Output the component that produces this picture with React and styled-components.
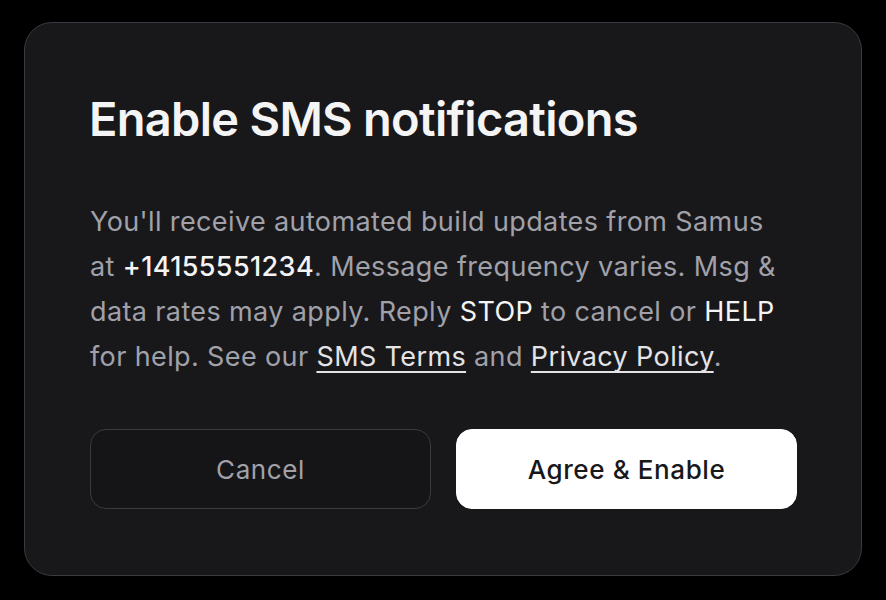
import React from 'react';
import styled, { createGlobalStyle } from 'styled-components';

const GlobalStyle = createGlobalStyle`
  html, body {
    margin: 0;
    padding: 0;
    background: #000000;
  }
  body {
    font-family: Inter, "Noto Sans", "Liberation Sans", sans-serif;
    -webkit-font-smoothing: antialiased;
  }
`;

const Screen = styled.div`
  width: 886px;
  height: 600px;
  box-sizing: border-box;
  padding: 22px 24px 24px 24px;
  background: #000000;
`;

const Dialog = styled.div`
  box-sizing: border-box;
  width: 838px;
  height: 554px;
  padding: 68px 64px 66px 65px;
  background: #18181b;
  border: 1.5px solid #3a3a40;
  border-radius: 28px;
  display: flex;
  flex-direction: column;
`;

const Title = styled.h2`
  margin: 0 0 0 -1px;
  font-size: 47px;
  line-height: 1.2;
  font-weight: 600;
  letter-spacing: -0.015em;
  color: #f4f4f5;
`;

const Body = styled.p`
  margin: 52px 0 0 0;
  max-width: 694px;
  font-size: 27px;
  line-height: 45px;
  letter-spacing: 0.38px;
  color: #a1a1aa;
`;

const Strong = styled.span`
  color: #f4f4f5;
  font-weight: ${p => (p.bold ? 500 : 400)};
`;

const Link = styled.a`
  color: #e4e4e7;
  text-decoration: underline;
  text-underline-offset: 5px;
  text-decoration-thickness: 1.5px;
  cursor: pointer;
`;

const Actions = styled.div`
  margin-top: auto;
  display: grid;
  grid-template-columns: 1fr 1fr;
  gap: 25px;
`;

const Button = styled.button`
  height: 80px;
  border-radius: 16px;
  font-family: inherit;
  font-size: 26px;
  letter-spacing: 0.6px;
  font-weight: ${p => (p.primary ? 500 : 400)};
  cursor: pointer;
  border: 1.5px solid ${p => (p.primary ? '#ffffff' : '#3a3a40')};
  background: ${p => (p.primary ? '#ffffff' : '#151518')};
  color: ${p => (p.primary ? '#18181b' : '#a1a1aa')};
`;

export default function App() {
  return (
    <>
      <GlobalStyle />
      <Screen>
        <Dialog>
          <Title>Enable SMS notifications</Title>
          <Body>
            You'll receive automated build updates from Samus at{' '}
            <Strong bold>+14155551234</Strong>. Message frequency varies. Msg &amp;
            data rates may apply. Reply <Strong>STOP</Strong> to cancel or{' '}
            <Strong>HELP</Strong> for help. See our <Link>SMS Terms</Link> and{' '}
            <Link>Privacy Policy</Link>.
          </Body>
          <Actions>
            <Button>Cancel</Button>
            <Button primary>Agree &amp; Enable</Button>
          </Actions>
        </Dialog>
      </Screen>
    </>
  );
}
